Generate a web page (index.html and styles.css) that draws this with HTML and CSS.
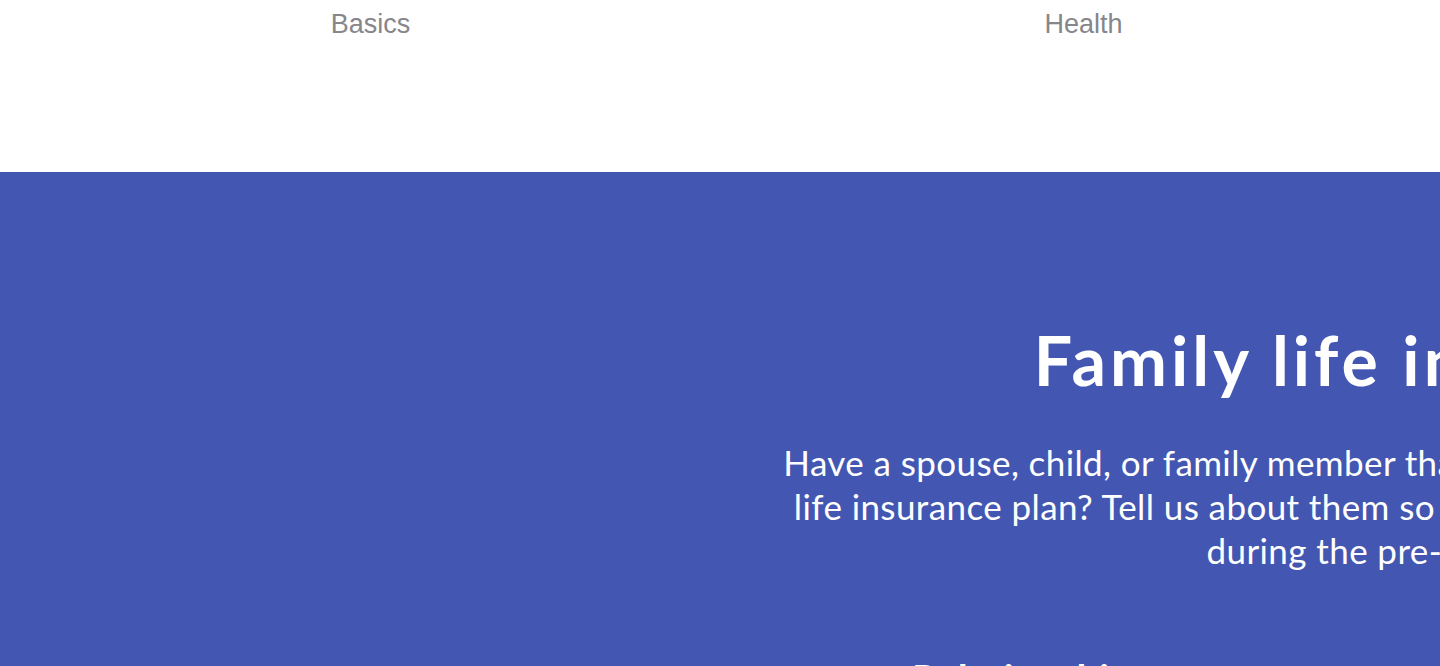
FILE: index.html
```html
<!DOCTYPE html>
<html lang="en">
<head>
<meta charset="utf-8">
<title>Family life insurance</title>
<link rel="stylesheet" href="styles.css">
</head>
<body>
<div class="page">
  <nav class="tabs">
    <div class="tab">Basics</div>
    <div class="tab">Health</div>
    <div class="tab">Lifestyle</div>
    <div class="tab">Family</div>
  </nav>
  <section class="family">
    <div class="family-inner">
      <h1 class="title">Family life insurance for all</h1>
      <p class="lead">Have a spouse, child, or family member that you would also like to protect with your own<br>life insurance plan? Tell us about them so we can include them in your coverage amount<br>during the pre-application process.</p>
      <form class="form">
        <h2 class="label">Relationship to you</h2>
      </form>
    </div>
  </section>
</div>
</body>
</html>
```

FILE: styles.css
```css
html, body {
  margin: 0;
  padding: 0;
  overflow: hidden;
  background: #ffffff;
}
.page {
  width: 2880px;
}
.tabs {
  display: flex;
  height: 172px;
  padding-left: 14px;
  box-sizing: border-box;
}
.tab {
  width: 713px;
  text-align: center;
  font-family: "Liberation Sans", Arial, sans-serif;
  font-size: 27px;
  line-height: 48px;
  color: #86868b;
}
.family {
  background: #4357b2;
  color: #ffffff;
  font-family: Lato, "Noto Sans", sans-serif;
  height: 600px;
}
.family-inner {
  margin-left: 759px;
  width: 1440px;
  text-align: center;
  padding-top: 148px;
}
.title {
  margin: 0;
  padding-left: 24px;
  font-size: 68px;
  font-weight: 700;
  letter-spacing: 4px;
  line-height: 80px;
  white-space: nowrap;
}
.lead {
  margin: 40px 0 0;
  font-size: 35px;
  line-height: 44px;
  letter-spacing: 0.4px;
  font-weight: 400;
  white-space: nowrap;
}
.form {
  width: 1134px;
  margin: 83px auto 0;
  text-align: left;
}
.label {
  margin: 0;
  font-size: 40px;
  font-weight: 700;
  line-height: 48px;
}
```
